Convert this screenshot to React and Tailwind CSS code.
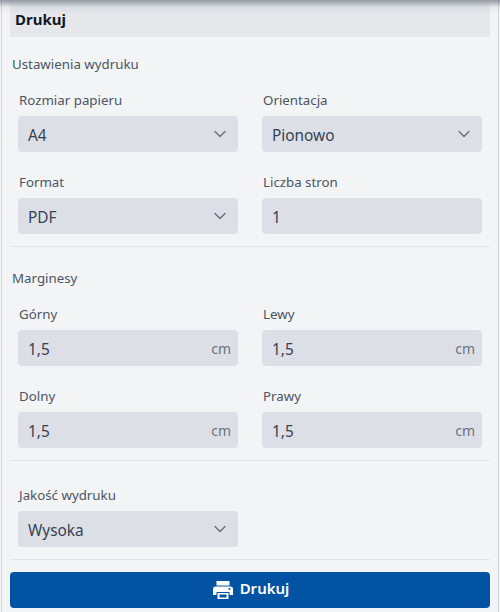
import { ChevronDown } from 'lucide-react';

function PrintIcon() {
  return (
    <svg viewBox="0 0 20 18" className="h-[18px] w-[20px]" fill="currentColor">
      <rect x="3.5" y="0" width="13" height="4.5" />
      <path
        fillRule="evenodd"
        d="M2.500 5.500h15A2.500 2.500 0 0 1 20 8v6h-3.500v-3h-13v3H0V8a2.500 2.500 0 0 1 2.500-2.500z M16.500 7a1 1 0 1 0 0 2 1 1 0 0 0 0-2z"
      />
      <path d="M4.500 12h11v6h-11z M6.500 13.500v3h7v-3z" fillRule="evenodd" />
    </svg>
  );
}

function Label({ children }) {
  return <div className="h-[20px] pl-px text-[13.3px] leading-[20px] text-[#4b5563]">{children}</div>;
}

function Select({ label, value }) {
  return (
    <div className="flex flex-col gap-[6px]">
      <Label>{label}</Label>
      <div className="flex h-9 items-center justify-between rounded-[4px] bg-[#dce0e6] pl-[10px] pr-[8px] pt-[3px] text-[15.4px] text-[#374151]">
        <span>{value}</span>
        <ChevronDown className="mb-[3px] h-[20px] w-[20px] text-[#6b7280]" strokeWidth={1.75} />
      </div>
    </div>
  );
}

function Field({ label, value, unit }) {
  return (
    <div className="flex flex-col gap-[6px]">
      <Label>{label}</Label>
      <div className="flex h-9 items-center justify-between rounded-[4px] bg-[#dce0e6] pl-[10px] pr-[7px] pt-[3px] text-[15.4px] text-[#374151]">
        <span>{value}</span>
        {unit && <span className="mb-[3px] text-[14px] text-[#6b7280]">{unit}</span>}
      </div>
    </div>
  );
}

export default function App() {
  return (
    <div className="relative h-[612px] w-[500px] overflow-hidden bg-[#f3f4f6] font-['Noto_Sans',sans-serif]">
      <div className="absolute bottom-0 left-[1px] top-0 w-px bg-[#d1d5db]" />
      <div className="absolute bottom-0 right-[1px] top-0 w-px bg-[#d1d5db]" />

      <div className="flex flex-col px-[10px] pt-[2px]">
        <div className="flex h-[35px] items-center bg-[#e5e7eb] px-[5px] text-[15px] font-bold text-[#111827]">
          Drukuj
        </div>

        <div className="mt-[17px] pl-[2px] text-[13.3px] leading-[20px] text-[#4b5563]">Ustawienia wydruku</div>
        <div className="mt-[16px] grid grid-cols-2 gap-x-[24px] gap-y-[20px] px-[8px]">
          <Select label="Rozmiar papieru" value="A4" />
          <Select label="Orientacja" value="Pionowo" />
          <Select label="Format" value="PDF" />
          <Field label="Liczba stron" value="1" />
        </div>
        <div className="mt-[12px] h-px bg-[#e0e3e9]" />

        <div className="mt-[21px] pl-[2px] text-[13.3px] leading-[20px] text-[#4b5563]">Marginesy</div>
        <div className="mt-[16px] grid grid-cols-2 gap-x-[24px] gap-y-[20px] px-[8px]">
          <Field label="Górny" value="1,5" unit="cm" />
          <Field label="Lewy" value="1,5" unit="cm" />
          <Field label="Dolny" value="1,5" unit="cm" />
          <Field label="Prawy" value="1,5" unit="cm" />
        </div>
        <div className="mt-[12px] h-px bg-[#e0e3e9]" />

        <div className="mt-[24px] grid grid-cols-2 gap-x-[24px] px-[8px]">
          <Select label="Jakość wydruku" value="Wysoka" />
        </div>
        <div className="mt-[12px] h-px bg-[#e0e3e9]" />

        <button className="mt-[12px] flex h-9 items-center justify-center gap-[7px] rounded-[4px] bg-[#0353a4] pl-[2px] text-[15px] font-semibold text-white">
          <span className="mt-[-1px]"><PrintIcon /></span>
          <span className="mb-[3px]">Drukuj</span>
        </button>
      </div>

      <div className="absolute inset-x-0 top-0 h-[14px] bg-gradient-to-b from-[#6b7280]/70 via-[#9ca3af]/15 to-transparent" />
    </div>
  );
}
